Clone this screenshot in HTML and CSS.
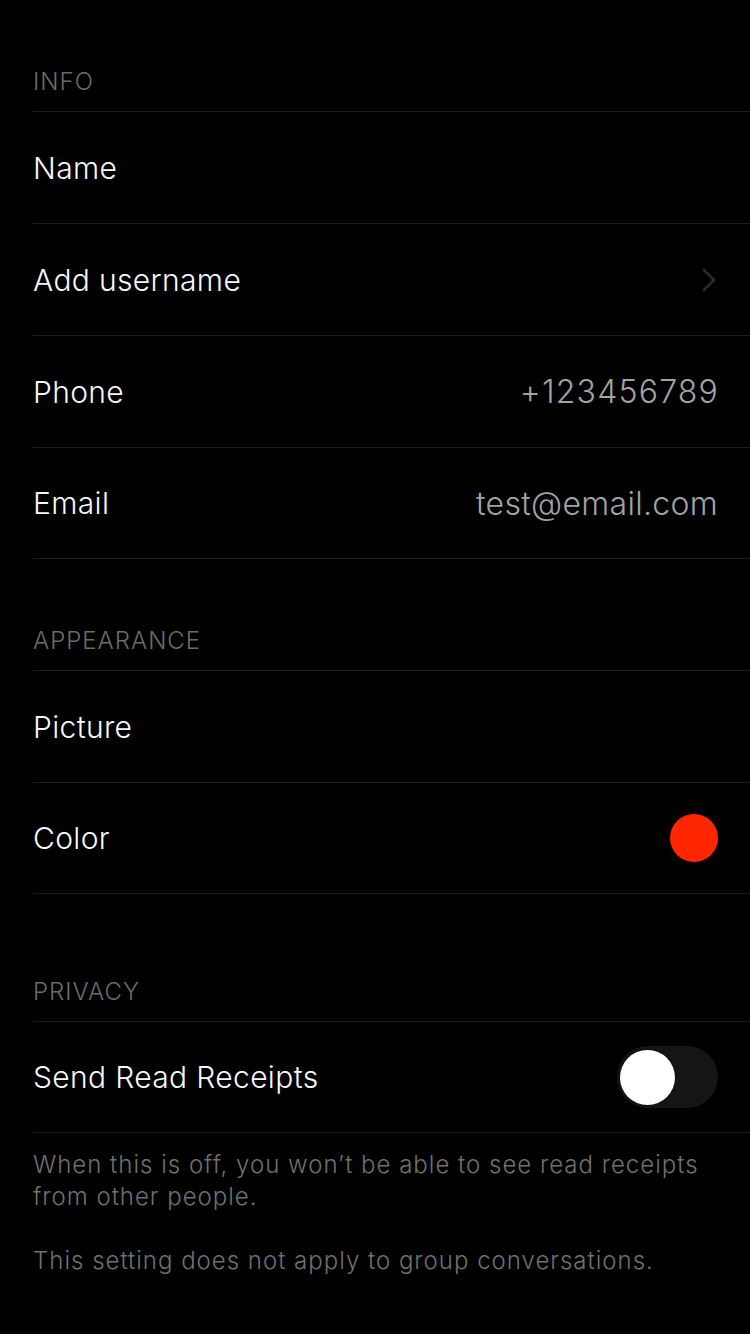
FILE: index.html
```html
<!DOCTYPE html>
<html>
<head>
<meta charset="utf-8">
<link rel="stylesheet" href="styles.css">
</head>
<body>
<div class="screen">
  <section class="section">
    <div class="section-header">INFO</div>
    <div class="row"><span class="label">Name</span></div>
    <div class="row"><span class="label">Add username</span>
      <svg class="chevron" width="16" height="26" viewBox="0 0 16 26"><path d="M3 3 L13 13 L3 23" fill="none" stroke="#2b2b2b" stroke-width="2.6" stroke-linecap="round" stroke-linejoin="round"/></svg>
    </div>
    <div class="row"><span class="label">Phone</span><span class="value value-num">+123456789</span></div>
    <div class="row row-last"><span class="label">Email</span><span class="value">test@email.com</span></div>
  </section>
  <section class="section">
    <div class="section-header">APPEARANCE</div>
    <div class="row"><span class="label">Picture</span></div>
    <div class="row row-last"><span class="label">Color</span><span class="swatch"></span></div>
  </section>
  <section class="section section-gap">
    <div class="section-header">PRIVACY</div>
    <div class="row row-last"><span class="label">Send Read Receipts</span>
      <span class="toggle"><span class="knob"></span></span>
    </div>
    <div class="footnote">
      <p>When this is off, you won’t be able to see read receipts from other people.</p>
      <p>This setting does not apply to group conversations.</p>
    </div>
  </section>
</div>
</body>
</html>
```
FILE: styles.css
```css
html, body {
  margin: 0;
  padding: 0;
  background: #000;
}
body {
  font-family: Inter, "Noto Sans", sans-serif;
  color: #f2f2f2;
}
.screen {
  width: 750px;
  min-height: 1334px;
  background: #000;
}
.section-header {
  height: 111px;
  box-sizing: border-box;
  padding: 0 0 14px 33px;
  display: flex;
  align-items: flex-end;
  font-size: 24px;
  font-weight: 300;
  line-height: 30px;
  color: #6b6b6b;
  letter-spacing: 1px;
}
.section-gap {
  margin-top: 16px;
}
.row {
  margin-left: 33px;
  padding-right: 32px;
  height: 112px;
  box-sizing: border-box;
  border-top: 1px solid #1c1c1c;
  display: flex;
  align-items: center;
  justify-content: space-between;
}
.row-last {
  border-bottom: 1px solid #1c1c1c;
}
.label {
  font-size: 30px;
  font-weight: 300;
  color: #f7f7f7;
  letter-spacing: 0.35px;
}
.value {
  font-size: 32px;
  font-weight: 300;
  color: #a3a3a3;
  letter-spacing: 0.3px;
}
.value-num {
  letter-spacing: 1.2px;
  margin-right: -1px;
}
.chevron {
  margin-right: 1px;
}
.swatch {
  width: 48px;
  height: 48px;
  border-radius: 50%;
  background: #ff2600;
}
.toggle {
  width: 101px;
  height: 62px;
  border-radius: 31px;
  background: #151515;
  display: flex;
  align-items: center;
  padding-left: 3px;
  box-sizing: border-box;
}
.knob {
  width: 55px;
  height: 55px;
  border-radius: 50%;
  background: #fff;
  box-shadow: 0 1px 3px rgba(0,0,0,0.4);
}
.footnote {
  padding: 16px 32px 0 33px;
  font-size: 24px;
  font-weight: 300;
  line-height: 32px;
  color: #707070;
  letter-spacing: 1px;
}
.footnote p {
  margin: 0 0 32px 0;
}
```
